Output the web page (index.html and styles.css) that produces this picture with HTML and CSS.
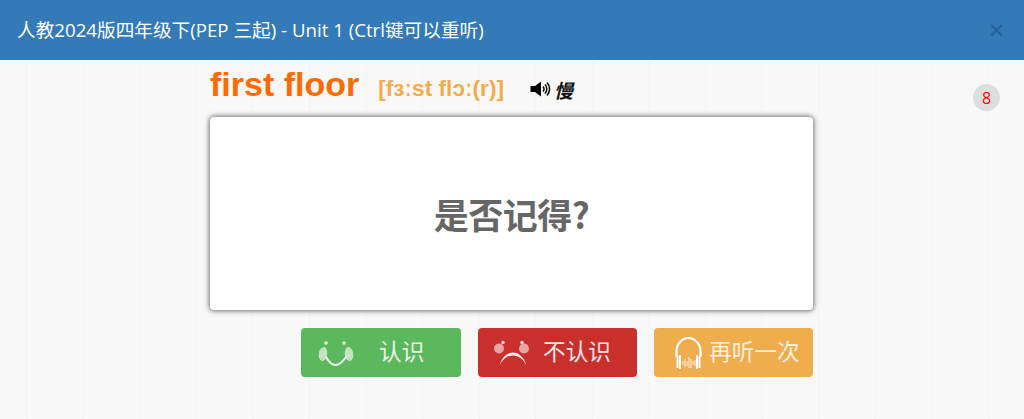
FILE: index.html
```html
<!DOCTYPE html>
<html lang="zh-CN">
<head>
<meta charset="utf-8">
<title>Unit 1</title>
<link rel="stylesheet" href="styles.css">
</head>
<body>
<header class="bar">
  <h1 class="bar-title">人教2024版四年级下(PEP 三起) - Unit 1 (Ctrl键可以重听)</h1>
  <span class="bar-close">×</span>
</header>
<main class="stage">
  <div class="word-row">
    <span class="word">first floor</span>
    <span class="phonetic">[fɜːst flɔː(r)]</span>
    <svg class="speaker" width="21" height="18" viewBox="0 0 21 18">
      <path d="M0.500 6h4.500L11 1.500v15L5 12H0.500z" fill="#000"/>
      <path d="M13 6.500a3.500 3.500 0 0 1 0 5M15 4.500a6.500 6.500 0 0 1 0 9M17 2.500a9.500 9.500 0 0 1 0 13" fill="none" stroke="#000" stroke-width="1.500"/>
    </svg>
    <span class="slow">慢</span>
  </div>
  <section class="card">是否记得?</section>
  <div class="actions">
    <button class="btn btn-green">
      <svg class="icon" width="38" height="32" viewBox="0 0 38 32">
        <ellipse cx="6" cy="17" rx="4.200" ry="7" fill="#c3e2c0" transform="rotate(10 6 17)"/>
        <ellipse cx="32" cy="17" rx="4.200" ry="7" fill="#c3e2c0" transform="rotate(-10 32 17)"/>
        <circle cx="9" cy="6" r="1.800" fill="#e8f5e6"/>
        <circle cx="27" cy="6" r="1.800" fill="#e8f5e6"/>
        <path d="M9 20Q18 36 29 20" fill="none" stroke="#f0f9ef" stroke-width="2" stroke-linecap="round"/>
      </svg>
      <span class="btn-label">认识</span>
    </button>
    <button class="btn btn-red">
      <svg class="icon" width="38" height="32" viewBox="0 0 38 32">
        <circle cx="7" cy="11.500" r="5" fill="#e9a5a5"/>
        <circle cx="32" cy="11.500" r="5" fill="#e9a5a5"/>
        <circle cx="11" cy="5.500" r="1.700" fill="#f7dcdc"/>
        <circle cx="30" cy="5.500" r="1.700" fill="#f7dcdc"/>
        <path d="M7.500 29C12 11 30 11 34.500 29C29 15 13 15 7.500 29z" fill="#fbeeee"/>
      </svg>
      <span class="btn-label">不认识</span>
    </button>
    <button class="btn btn-orange">
      <svg class="icon" width="32" height="36" viewBox="0 0 32 36">
        <path d="M3.500 22V16.500a12 13.500 0 0 1 24 0V22" fill="none" stroke="#fff" stroke-width="2.200"/>
        <path d="M4.500 21v12M7 20v14M24 20v14M26.500 21v12" fill="none" stroke="#fff" stroke-width="2"/>
        <path d="M10 26v4M12 24v8M14 26v5M16 22v11M18 24v9M20 26v4M22 25v6" fill="none" stroke="#fdeacf" stroke-width="1.100"/>
      </svg>
      <span class="btn-label">再听一次</span>
    </button>
  </div>
  <span class="badge">8</span>
</main>
</body>
</html>
```
FILE: styles.css
```css
* { box-sizing: border-box; }
html, body { margin: 0; height: 100%; overflow: hidden; }
body {
  font-family: "Open Sans", "Noto Sans CJK SC", sans-serif;
  background: #f8f8f8;
  display: flex;
  flex-direction: column;
}
.bar {
  height: 60px;
  flex: none;
  background: #337ab7;
  display: flex;
  align-items: center;
  justify-content: space-between;
  padding: 0 20px 0 17px;
}
.bar-title {
  margin: 0;
  font-size: 18.670px;
  font-weight: 400;
  color: #fff;
  white-space: nowrap;
  line-height: 1;
}
.bar-close {
  font-family: "Liberation Sans", sans-serif;
  font-size: 26px;
  line-height: 1;
  color: #1f5a8f;
  opacity: .75;
}
.stage {
  position: relative;
  flex: 1;
  padding: 0 211px 0 210px;
  background-color: #f8f8f8;
  background-image:
    repeating-linear-gradient(to bottom, #f8f8f8 0 2px, transparent 2px 4px),
    linear-gradient(to right, #eeeeee 1px, transparent 1px);
  background-size: 100% 100%, 56.600px 100%;
  background-position: 0 0, 26px 0;
}
.word-row {
  height: 57px;
  display: flex;
  align-items: center;
  font-family: "Liberation Sans", Arial, sans-serif;
  font-weight: 700;
}
.word {
  font-size: 34px;
  color: #ff6a00;
  line-height: 1;
  margin-top: -9px;
}
.phonetic {
  font-size: 22.670px;
  color: #f0ad4e;
  margin-left: 19px;
  font-family: "Liberation Sans", "DejaVu Sans", sans-serif;
  line-height: 1;
  margin-top: -1px;
}
.speaker { margin-left: 26px; margin-top: 1px; }
.slow {
  font-family: "Noto Sans CJK SC", sans-serif;
  font-style: italic;
  font-size: 19px;
  color: #111;
  margin-left: 3px;
  margin-top: 1px;
  line-height: 1;
}
.card {
  height: 193px;
  background: #fff;
  border-radius: 4px;
  box-shadow: 0 0 5px 1px rgba(0, 0, 0, .55);
  display: flex;
  align-items: center;
  justify-content: center;
  font-family: "Noto Sans CJK SC", sans-serif;
  font-size: 35px;
  letter-spacing: -0.500px;
  font-weight: 700;
  color: #666;
}
.actions {
  display: flex;
  justify-content: flex-end;
  gap: 17px;
  margin-top: 18px;
}
.btn {
  width: 159px;
  height: 49px;
  border: 0;
  border-radius: 4px;
  padding: 0;
  display: flex;
  align-items: center;
  color: #fff;
  font-family: "Noto Sans CJK SC", sans-serif;
  font-size: 22.670px;
}
.btn-green { background: #5cb85c; padding-left: 16px; color: #eaf6e8; width: 160px; }
.btn-red { background: #c9302c; padding-left: 14px; color: #f9e6e6; }
.btn-orange { background: #f0ad4e; padding-left: 19px; color: #fdf1df; }
.icon { flex: none; }
.btn-green .btn-label { margin-left: 24px; }
.btn-red .btn-label { margin-left: 13px; }
.btn-orange .btn-label { margin-left: 4px; }
.btn-label { line-height: 1; margin-top: -3px; }
.badge {
  position: absolute;
  left: 973px;
  top: 24px;
  width: 27px;
  height: 27px;
  border-radius: 50%;
  background: #dedede;
  color: #f00;
  font-family: "Open Sans", sans-serif;
  font-size: 16px;
  display: flex;
  align-items: center;
  justify-content: center;
}
```
